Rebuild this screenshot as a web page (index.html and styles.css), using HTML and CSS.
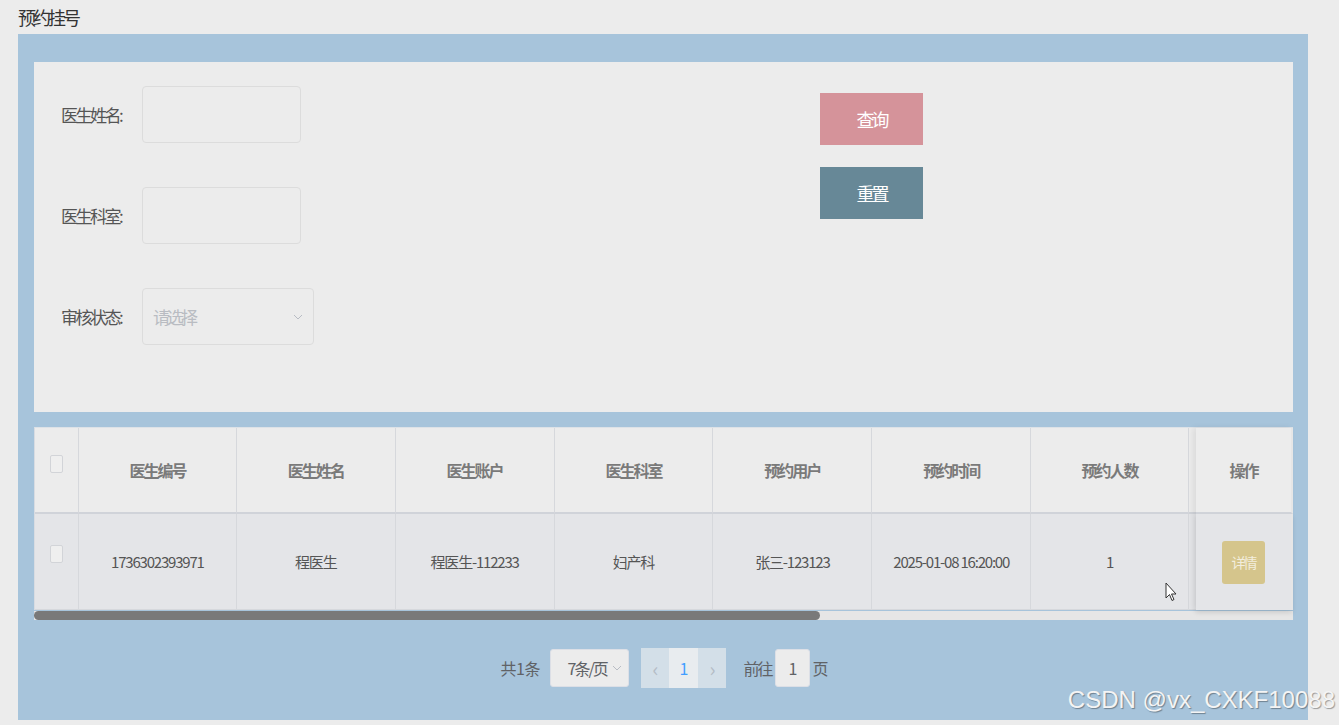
FILE: index.html
```html
<!DOCTYPE html>
<html lang="zh-CN">
<head>
    <meta charset="UTF-8">
    <title>预约挂号</title>
    <link rel="stylesheet" href="styles.css">
</head>
<body>
    <div class="page-title">预约挂号</div>

    <section class="panel">
        <div class="search">
            <div class="fields">
                <div class="field">
                    <label class="field-label">医生姓名:</label>
                    <div class="input"></div>
                </div>
                <div class="field">
                    <label class="field-label">医生科室:</label>
                    <div class="input"></div>
                </div>
                <div class="field">
                    <label class="field-label">审核状态:</label>
                    <div class="input select">
                        <span class="placeholder">请选择</span>
                        <svg class="caret" width="10" height="8" viewBox="0 0 10 8"><path d="M1 2l4 4 4-4" fill="none" stroke="#b8bcc4" stroke-width="1"/></svg>
                    </div>
                </div>
            </div>
            <div class="actions">
                <button class="btn btn-query">查询</button>
                <button class="btn btn-reset">重置</button>
            </div>
        </div>

        <div class="table-wrap">
            <div class="table-row-wrap">
                <div class="table-main">
                    <div class="tr thead">
                        <div class="td td-check"><span class="checkbox"></span></div>
                        <div class="td">医生编号</div>
                        <div class="td">医生姓名</div>
                        <div class="td">医生账户</div>
                        <div class="td">医生科室</div>
                        <div class="td">预约用户</div>
                        <div class="td">预约时间</div>
                        <div class="td">预约人数</div>
                        <div class="td td-rest"></div>
                    </div>
                    <div class="tr tbody">
                        <div class="td td-check"><span class="checkbox"></span></div>
                        <div class="td">1736302393971</div>
                        <div class="td">程医生</div>
                        <div class="td">程医生-112233</div>
                        <div class="td">妇产科</div>
                        <div class="td">张三-123123</div>
                        <div class="td">2025-01-08 16:20:00</div>
                        <div class="td">1</div>
                        <div class="td td-rest"></div>
                    </div>
                </div>
                <div class="table-fixed">
                    <div class="td fixed-head">操作</div>
                    <div class="td fixed-body"><button class="btn-detail">详情</button></div>
                </div>
            </div>
            <div class="scrollbar"><div class="thumb"></div></div>
        </div>

        <div class="pagination">
            <span class="total">共 1 条</span>
            <div class="page-size">
                <span>7条/页</span>
                <svg width="10" height="8" viewBox="0 0 10 8"><path d="M1 2l4 4 4-4" fill="none" stroke="#b8bcc4" stroke-width="1"/></svg>
            </div>
            <div class="pager">
                <span class="pager-btn">&lsaquo;</span>
                <span class="pager-num">1</span>
                <span class="pager-btn">&rsaquo;</span>
            </div>
            <span class="goto">前往</span>
            <div class="goto-input">1</div>
            <span class="goto-unit">页</span>
        </div>

        <svg class="cursor" width="12" height="20" viewBox="0 0 12 20"><path d="M1 1v15l3.5-3.5 2.5 6 2-1-2.5-5.5H11z" fill="#fff" stroke="#333" stroke-width="1"/></svg>
    </section>

    <div class="watermark">CSDN @vx_CXKF10088</div>
</body>
</html>
```

FILE: styles.css
```css
body {
    margin: 0;
    background-color: #ececec;
    font-family: "Noto Sans CJK SC", "Liberation Sans", sans-serif;
    color: #555;
    position: relative;
    height: 725px;
    overflow: hidden;
}
.page-title {
    padding: 5px 0 0 18px;
    height: 34px;
    box-sizing: border-box;
    font-size: 18px;
    letter-spacing: -3px;
    color: #333;
    line-height: 24px;
}
.panel {
    position: relative;
    margin-left: 18px;
    width: 1290px;
    height: 686px;
    box-sizing: border-box;
    background-color: #a7c4db;
    padding: 28px 15px 0 16px;
}
.search {
    display: flex;
    height: 350px;
    background-color: #ececec;
    box-sizing: border-box;
    padding: 24px 0 0 27px;
}
.fields {
    width: 759px;
    display: flex;
    flex-direction: column;
    gap: 44px;
}
.field {
    display: flex;
    align-items: center;
    height: 57px;
}
.field-label {
    width: 81px;
    font-size: 17px;
    letter-spacing: -2.5px;
    color: #555;
}
.input {
    width: 157px;
    height: 55px;
    border: 1px solid #dcdcdc;
    border-radius: 4px;
    background-color: #ececec;
}
.select {
    width: 172px;
    display: flex;
    align-items: center;
    justify-content: space-between;
    padding: 0 10px;
    box-sizing: border-box;
    height: 57px;
}
.placeholder {
    font-size: 17px;
    letter-spacing: -3px;
    color: #b9bcc2;
}
.actions {
    margin-top: 7px;
    display: flex;
    flex-direction: column;
    gap: 22px;
}
.btn {
    width: 103px;
    height: 52px;
    border: none;
    color: #fff;
    font-family: inherit;
    font-size: 18px;
    letter-spacing: -3px;
}
.btn-query {
    background-color: #d5939a;
}
.btn-reset {
    background-color: #678897;
}
.table-wrap {
    margin-top: 15px;
    width: 1259px;
}
.table-row-wrap {
    display: flex;
    background-color: #ececec;
    border-top: 1px solid #dde2e7;
    border-left: 1px solid #d8dce2;
}
.table-main {
    width: 1161px;
}
.tr {
    display: flex;
}
.td {
    display: flex;
    align-items: center;
    justify-content: center;
    border-right: 1px solid #d6d8dc;
    box-sizing: border-box;
    width: 159px;
    font-size: 16px;
    letter-spacing: -2px;
}
.thead .td {
    height: 86px;
    font-weight: bold;
    color: #7a7a7a;
    background-color: #ececec;
    border-bottom: 2px solid #d0d3d9;
}
.tbody .td {
    height: 96px;
    font-size: 15px;
    letter-spacing: -1.2px;
    color: #555;
    background-color: #e4e5e8;
    border-bottom: 1px solid #d6d8dc;
}
.tr .td:nth-child(2),
.tr .td:nth-child(8) {
    width: 158px;
}
.td-check {
    width: 44px !important;
    align-items: flex-start;
}
.thead .td-check {
    padding-top: 27px;
}
.tbody .td-check {
    padding-top: 31px;
}
.td-rest {
    width: 7px !important;
    border-right: none;
}
.checkbox {
    width: 11px;
    height: 16px;
    border: 1px solid #d2d4d8;
    border-radius: 2px;
    background-color: #efefef;
}
.table-fixed {
    width: 97px;
    box-shadow: -3px 0 6px rgba(0, 0, 0, 0.08);
}
.table-fixed .td {
    width: 97px;
    border-right: 2px solid #e6e6e6;
}
.fixed-head {
    height: 86px;
    font-weight: bold;
    color: #7a7a7a;
    background-color: #ececec;
    border-bottom: 2px solid #d0d3d9;
}
.fixed-body {
    height: 96px;
    background-color: #e4e5e8;
    box-shadow: 0 3px 5px rgba(0, 0, 0, 0.08);
}
.btn-detail {
    width: 43px;
    height: 43px;
    border: none;
    border-radius: 3px;
    background-color: #d5c58c;
    color: #f3eedd;
    font-family: inherit;
    font-size: 14px;
    letter-spacing: -2px;
}
.scrollbar {
    height: 9px;
    background-color: #e6e6e6;
    margin-top: 1px;
}
.thumb {
    width: 786px;
    height: 9px;
    border-radius: 5px;
    background-color: #797979;
}
.pagination {
    display: flex;
    align-items: center;
    justify-content: center;
    margin-top: 28px;
    height: 40px;
    font-size: 16px;
    color: #606266;
    letter-spacing: -2px;
}
.total {
    margin-right: 11px;
}
.page-size {
    width: 79px;
    height: 38px;
    box-sizing: border-box;
    border: 1px solid #dcdfe6;
    border-radius: 3px;
    background-color: #ececec;
    display: flex;
    align-items: center;
    justify-content: space-between;
    padding: 0 6px 0 17px;
    margin-right: 12px;
}
.pager {
    display: flex;
    height: 40px;
    margin-right: 18px;
}
.pager-btn {
    width: 28px;
    display: flex;
    align-items: center;
    justify-content: center;
    background-color: #d3dfe8;
    color: #b4bcc5;
    font-size: 20px;
}
.pager-num {
    width: 29px;
    display: flex;
    align-items: center;
    justify-content: center;
    background-color: #e8ecef;
    color: #409eff;
}
.goto {
    margin-right: 3px;
}
.goto-input {
    width: 35px;
    height: 38px;
    box-sizing: border-box;
    border: 1px solid #dcdfe6;
    border-radius: 3px;
    background-color: #ececec;
    display: flex;
    align-items: center;
    justify-content: center;
    margin-right: 3px;
}
.cursor {
    position: absolute;
    left: 1147px;
    top: 548px;
}
.watermark {
    position: absolute;
    right: 4px;
    top: 686px;
    font-family: "Liberation Sans", sans-serif;
    font-size: 24px;
    color: #f4f4f4;
    text-shadow: 1px 1px 1px rgba(0, 0, 0, 0.35);
}
```
